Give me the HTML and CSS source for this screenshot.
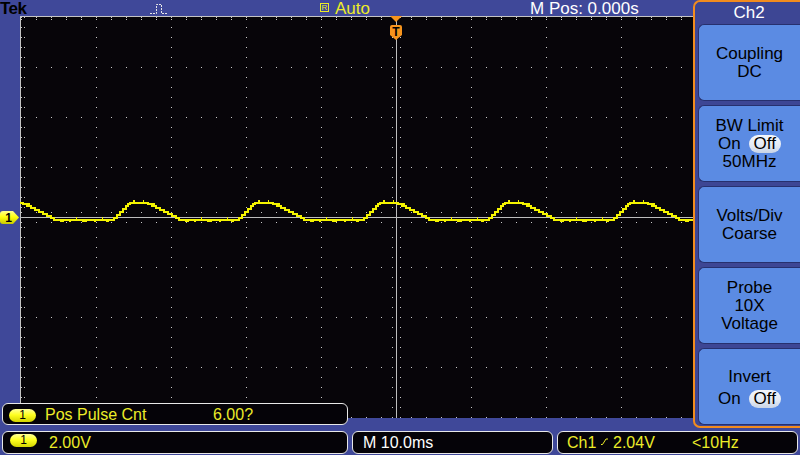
FILE: index.html
```html
<!DOCTYPE html>
<html>
<head>
<meta charset="utf-8">
<title>Tek scope</title>
<link rel="stylesheet" href="styles.css">
</head>
<body>
<div class="screen">
  <div class="main">
    <div class="left">
      <div class="topbar">
        <span class="tek">Tek</span>
        <span class="acq"><svg width="20" height="16" viewBox="0 0 20 16"><path d="M0 13.5H6.5V4.5H11.5V13.5H18" fill="none" stroke="#e8e8e8" stroke-width="1" stroke-dasharray="2 1"/></svg></span>
        <span class="trig"><span class="rbox">R</span><span class="auto">Auto</span></span>
        <span class="mpos">M Pos: 0.000s</span>
      </div>
      <div class="scope">
        <div class="gutter"></div>
        <svg class="grat" width="673" height="402" viewBox="0 0 673 402">
          <defs>
            <pattern id="pv" width="75" height="10" patternUnits="userSpaceOnUse"><rect x="1" y="1" width="1" height="1" fill="#c8c8c8"/></pattern>
            <pattern id="ph" width="15" height="50" patternUnits="userSpaceOnUse"><rect x="1" y="1" width="1" height="1" fill="#c8c8c8"/></pattern>
            <pattern id="pt" width="15" height="402" patternUnits="userSpaceOnUse"><rect x="1" y="3" width="1" height="1" fill="#c8c8c8"/></pattern>
            <pattern id="pl" width="673" height="10" patternUnits="userSpaceOnUse"><rect x="4" y="1" width="1" height="1" fill="#c8c8c8"/></pattern>
            <pattern id="pcv" width="673" height="10" patternUnits="userSpaceOnUse"><rect x="372" y="1" width="1" height="1" fill="#c8c8c8"/><rect x="380" y="1" width="1" height="1" fill="#c8c8c8"/></pattern>
            <pattern id="pch" width="15" height="402" patternUnits="userSpaceOnUse"><rect x="1" y="196" width="1" height="1" fill="#c8c8c8"/><rect x="1" y="206" width="1" height="1" fill="#c8c8c8"/></pattern>
            <g id="per">
              <path d="M-27 220H-25V218H-22V215H-19V212H-16V209H-13V206H-11V204H-9V203H9V204H13V206H17V208H21V210H25V212H29V214H33V216H37V218H40V220H98" fill="none" stroke="#f4f400" stroke-width="2"/>
              <rect x="-6" y="200" width="2" height="2" fill="#f4f400"/>
              <rect x="4" y="200" width="1" height="2" fill="#f4f400"/>
              <rect x="-12" y="203" width="2" height="2" fill="#f4f400"/>
              <rect x="14" y="203" width="2" height="2" fill="#f4f400"/>
              <rect x="46" y="220" width="4" height="2" fill="#f4f400"/>
              <rect x="55" y="220" width="2" height="2" fill="#f4f400"/>
              <rect x="62" y="217" width="1" height="2" fill="#f4f400"/>
              <rect x="68" y="220" width="5" height="2" fill="#f4f400"/>
              <rect x="80" y="220" width="2" height="2" fill="#f4f400"/>
              <rect x="88" y="217" width="1" height="2" fill="#f4f400"/>
              <rect x="92" y="220" width="3" height="2" fill="#f4f400"/>
            </g>
          </defs>
          <rect width="673" height="402" fill="#070509"/>
          <rect width="673" height="402" fill="url(#pv)"/>
          <rect width="673" height="402" fill="url(#ph)"/>
          <rect width="673" height="402" fill="url(#pt)"/>
          <rect width="673" height="402" fill="url(#pl)"/>
          <rect width="673" height="402" fill="url(#pcv)"/>
          <rect width="673" height="402" fill="url(#pch)"/>
          <rect x="0" y="0" width="673" height="1" fill="#c4c4c4"/>
          <rect x="0" y="0" width="1" height="402" fill="#c4c4c4"/>
          <rect x="376" y="0" width="1" height="402" fill="#bdbdbd"/>
          <rect x="0" y="201" width="673" height="1" fill="#bdbdbd"/>
          <g transform="translate(-20 -16)">
            <use href="#per" x="14"/>
            <use href="#per" x="139"/>
            <use href="#per" x="264"/>
            <use href="#per" x="389"/>
            <use href="#per" x="514"/>
            <use href="#per" x="639"/>
          </g>
        </svg>
        <div class="ch-marker">
          <svg width="19" height="13" viewBox="0 0 19 13">
            <defs><linearGradient id="yg" x1="0" y1="0" x2="0" y2="1"><stop offset="0" stop-color="#ffff90"/><stop offset="0.45" stop-color="#ffff10"/><stop offset="1" stop-color="#c8c800"/></linearGradient></defs>
            <path d="M3 0H13L19 6.5L13 13H3Q0 13 0 10V3Q0 0 3 0Z" fill="url(#yg)"/>
            <text x="8.5" y="11" font-family="Liberation Sans, sans-serif" font-size="12" font-weight="bold" text-anchor="middle" fill="#000">1</text>
          </svg>
        </div>
        <div class="trig-marker">
          <svg width="13" height="25" viewBox="0 0 13 25">
            <path d="M0 0H12L6 6Z" fill="#f7941d"/>
            <path d="M2 9H10Q12 9 12 11V19L6 24L0 19V11Q0 9 2 9Z" fill="#f7941d"/>
            <text x="6" y="20" font-family="Liberation Sans, sans-serif" font-size="12" font-weight="bold" text-anchor="middle" fill="#000">T</text>
          </svg>
        </div>
        <div class="meas">
          <span class="badge">1</span>
          <span class="meas-name">Pos Pulse Cnt</span>
          <span class="meas-val">6.00?</span>
        </div>
      </div>
    </div>
    <div class="menu">
      <div class="menu-title">Ch2</div>
      <div class="btn"><div>Coupling</div><div>DC</div></div>
      <div class="btn"><div>BW Limit</div><div>On <span class="pill">Off</span></div><div>50MHz</div></div>
      <div class="btn"><div>Volts/Div</div><div>Coarse</div></div>
      <div class="btn"><div>Probe</div><div>10X</div><div>Voltage</div></div>
      <div class="btn btn-tall"><div>Invert</div><div>On <span class="pill">Off</span></div></div>
    </div>
  </div>
  <div class="bottom">
    <div class="box box-ch"><span class="badge badge-b">1</span><span class="yl">2.00V</span></div>
    <div class="box box-time"><span class="wt">M 10.0ms</span></div>
    <div class="box box-trig">
      <span class="yl w-ch">Ch1</span>
      <svg class="edge" width="7" height="7" viewBox="0 0 7 7"><path d="M0 6.5H1.5L5 1H7" fill="none" stroke="#ecec28" stroke-width="1"/></svg>
      <span class="yl w-lvl">2.04V</span>
      <span class="yl">&lt;10Hz</span>
    </div>
  </div>
</div>
</body>
</html>
```

FILE: styles.css
```css
* { box-sizing: border-box; }

body {
  margin: 0;
  background: #3f4899;
  font-family: "Liberation Sans", Arial, sans-serif;
}

.screen {
  width: 800px;
  height: 455px;
  display: flex;
  flex-direction: column;
  overflow: hidden;
  background: #3f4899;
}

.main {
  display: flex;
  height: 431px;
}

.left {
  width: 693px;
  display: flex;
  flex-direction: column;
}

.topbar {
  height: 16px;
  display: flex;
  align-items: flex-start;
  font-size: 17px;
  line-height: 18px;
  white-space: nowrap;
}

.tek {
  width: 150px;
  font-size: 17px;
  line-height: 17px;
  font-weight: bold;
  color: #000;
  letter-spacing: -0.6px;
}

.acq {
  width: 170px;
  display: flex;
}

.trig {
  width: 210px;
  display: flex;
  align-items: flex-start;
}

.rbox {
  margin-top: 3px;
  width: 9px;
  height: 9px;
  border: 1px solid #ecec28;
  color: #ecec28;
  font-size: 8px;
  line-height: 7px;
  text-align: center;
  margin-right: 6px;
}

.auto {
  color: #ecec28;
}

.mpos {
  color: #ffffff;
}

.scope {
  position: relative;
  height: 415px;
  display: flex;
  align-items: flex-start;
}

.gutter {
  width: 20px;
  flex: none;
}

.grat {
  display: block;
  flex: none;
}

.ch-marker {
  position: absolute;
  left: 0;
  top: 195px;
  width: 19px;
  height: 13px;
}

.ch-marker svg,
.trig-marker svg {
  display: block;
}

.trig-marker {
  position: absolute;
  left: 390px;
  top: 0;
  width: 13px;
  height: 25px;
}

.meas {
  position: absolute;
  left: 2px;
  top: 387px;
  width: 346px;
  height: 22px;
  padding-top: 2px;
  background: #050308;
  border: 1px solid #e8e8e8;
  border-radius: 6px;
  display: flex;
  align-items: center;
  font-size: 16px;
  line-height: 18px;
  color: #ecec28;
  white-space: nowrap;
}

.badge {
  flex: none;
  width: 27px;
  height: 13px;
  border-radius: 7px;
  background: linear-gradient(#ffff9a 0%, #ffff20 45%, #d4d400 100%);
  color: #000;
  font-size: 12px;
  line-height: 13px;
  text-align: center;
}

.meas .badge {
  margin-left: 6px;
  margin-right: 9px;
}

.meas-name {
  width: 168px;
}

.menu {
  width: 107px;
  height: 428px;
  flex: none;
  border: 2px solid #f28c1e;
  border-right: none;
  border-radius: 7px 0 0 7px;
  background: #3d4694;
  padding: 0 0 0 3px;
  display: flex;
  flex-direction: column;
  gap: 4px;
}

.menu-title {
  height: 22px;
  margin-bottom: -4px;
  color: #ffffff;
  font-size: 17px;
  line-height: 22px;
  text-align: center;
}

.btn {
  height: 77px;
  background: #5b8be3;
  border: 1px solid #27306e;
  border-right: none;
  border-radius: 6px 0 0 6px;
  display: flex;
  flex-direction: column;
  justify-content: center;
  align-items: center;
  font-size: 17px;
  line-height: 18px;
  color: #000;
  white-space: nowrap;
}

.btn-tall {
  line-height: 22px;
  padding-top: 2px;
}

.pill {
  display: inline-block;
  margin-left: 3px;
  padding: 0 5px;
  line-height: 18px;
  border-radius: 9px;
  background: linear-gradient(#f4f7fc 0%, #e2e9f4 60%, #c9d4e6 100%);
  color: #000;
}

.bottom {
  height: 24px;
  display: flex;
  padding-left: 2px;
  gap: 4px;
}

.box {
  height: 23px;
  background: #050308;
  border: 1px solid #e8e8e8;
  border-radius: 6px;
  display: flex;
  align-items: center;
  font-size: 16px;
  line-height: 18px;
  white-space: nowrap;
}

.box-ch {
  width: 346px;
}

.box-ch .badge {
  margin-left: 7px;
  margin-right: 12px;
  align-self: flex-start;
  margin-top: 2px;
}

.box-time {
  width: 201px;
  padding-left: 10px;
}

.box-trig {
  width: 241px;
  padding-left: 9px;
}

.yl {
  color: #ecec28;
}

.wt {
  color: #ffffff;
}

.w-ch {
  width: 34px;
}

.edge {
  display: block;
  width: 7px;
  margin-right: 5px;
  margin-top: -3px;
}

.w-lvl {
  width: 79px;
}
```
